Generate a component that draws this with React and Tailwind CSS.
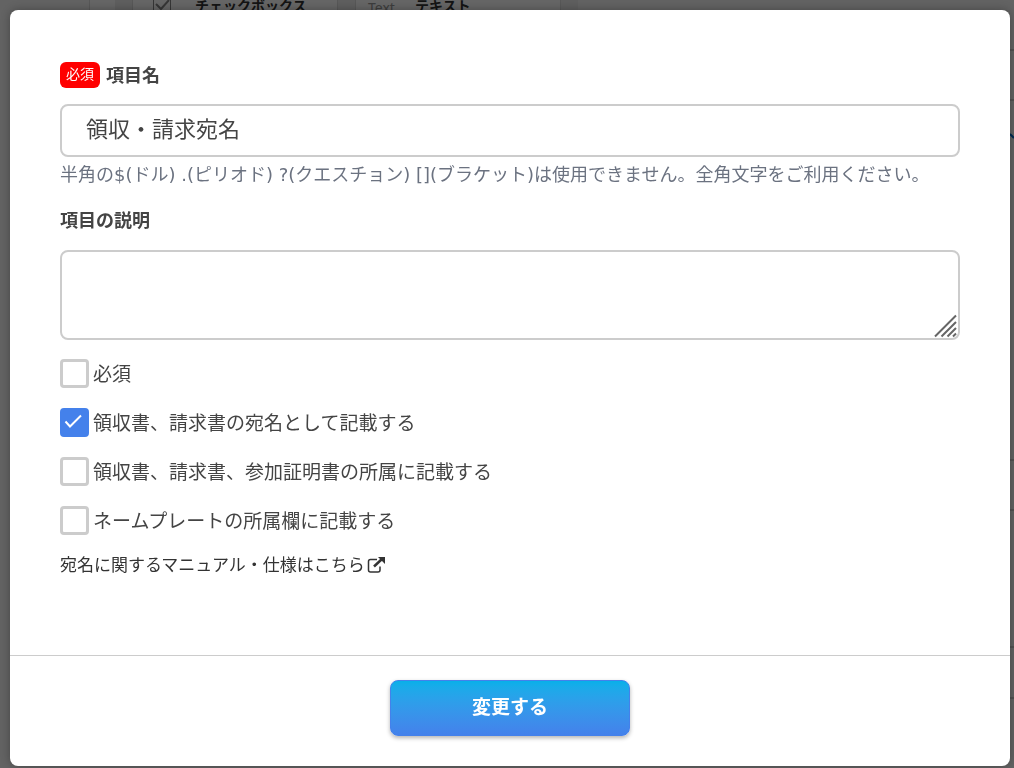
import { useState } from "react";

const OPTIONS = [
  { id: "required", label: "必須" },
  { id: "addressee", label: "領収書、請求書の宛名として記載する" },
  { id: "affiliation", label: "領収書、請求書、参加証明書の所属に記載する" },
  { id: "nameplate", label: "ネームプレートの所属欄に記載する" },
];

// Page that stays visible around the dialog
function FieldPalette() {
  return (
    <div
      className="fixed inset-0 flex justify-between overflow-hidden bg-[#f8f8f8]"
      aria-hidden="true"
    >
      <div className="flex h-10 pl-[89px] text-sm leading-5 font-bold text-[#333]">
        <div className="w-[26px] border-l border-[#ddd] bg-white" />
        <div className="w-[17px] bg-[#eee]" />
        <div className="flex w-[206px] border-x border-[#ddd] bg-white pl-5">
          <svg width="18" height="12" viewBox="0 0 18 12" fill="none" stroke="#888">
            <path d="M.5 0v11.500h17V0" />
            <path d="M3 4l5 5 8-9" strokeWidth="2" />
          </svg>
          <span className="-mt-1 ml-6 whitespace-nowrap">チェックボックス</span>
        </div>
        <div className="w-[17px] bg-[#eee]" />
        <div className="flex w-[206px] border-x border-[#ddd] bg-white pl-3">
          <span className="-mt-0.5 font-normal text-[#999]">Text</span>
          <span className="-mt-1 ml-5">テキスト</span>
        </div>
        <div className="w-[17px] bg-[#eee]" />
      </div>
      <div className="w-2 shrink-0 border-[#ccc]">
        <div className="h-[51px] border-b-2 border-[#ccc]" />
        <div className="h-[50px] border-b-2 border-[#ccc]" />
        <div className="flex h-[360px] justify-end border-b-2 border-[#ccc]">
          <svg className="mt-[30px]" width="4" height="8" viewBox="0 0 4 8">
            <path d="M0 3l4 4" stroke="#06c" strokeWidth="2" />
          </svg>
        </div>
        <div className="h-[50px] border-b-2 border-[#ccc]" />
        <div className="h-[137px] border-b-2 border-[#ccc]" />
        <div className="h-[51px] border-b-2 border-[#ccc]" />
      </div>
    </div>
  );
}

function SettingCheckbox({ id, label, checked, onChange }) {
  return (
    <div className="flex h-[29px] items-center gap-1">
      <span className="relative flex">
        <input
          id={id}
          type="checkbox"
          checked={checked}
          onChange={onChange}
          className="size-[29px] appearance-none rounded-sm border-3 border-[#ccc] bg-white checked:border-[#4481eb] checked:bg-[#4481eb]"
        />
        {checked && (
          <svg
            className="pointer-events-none absolute inset-0"
            width="29"
            height="29"
            viewBox="0 0 29 29"
            fill="none"
            stroke="white"
            strokeWidth="2"
          >
            <path d="M5.500 13.500l4.500 5L21 7.500" />
          </svg>
        )}
      </span>
      <label htmlFor={id} className="pt-0.5 text-[19px]">
        {label}
      </label>
    </div>
  );
}

export default function App() {
  const [name, setName] = useState("領収・請求宛名");
  const [description, setDescription] = useState("");
  const [selected, setSelected] = useState(["addressee"]);

  const toggle = (id) => {
    setSelected((prev) =>
      prev.includes(id) ? prev.filter((item) => item !== id) : [...prev, id],
    );
  };

  return (
    <div className="font-['Noto_Sans','Noto_Sans_CJK_JP',sans-serif] text-[#444]">
      <FieldPalette />
      <div className="fixed inset-0 bg-black/60" />

      {/* Dialog */}
      <form
        role="dialog"
        onSubmit={(e) => e.preventDefault()}
        className="relative mt-2.5 mr-1 mb-0.5 ml-2.5 rounded-lg bg-white shadow-[0_0_10px_rgba(0,0,0,0.3)]"
      >
        <div className="px-[50px] pt-13 pb-19">
          <div className="flex h-[26px] items-center gap-1.5">
            <span className="flex h-[26px] items-center rounded-md bg-[#f00] px-1.5 pb-0.5 text-sm text-white">
              必須
            </span>
            <label htmlFor="name" className="text-[18px] font-bold">
              項目名
            </label>
          </div>
          <input
            id="name"
            type="text"
            value={name}
            onChange={(e) => setName(e.target.value)}
            className="mt-4 block h-[53px] w-full rounded-lg border-2 border-[#ccc] bg-white px-6 pb-2 text-[22px]"
          />
          <p className="font-['DejaVu_Sans','Noto_Sans_CJK_JP',sans-serif] text-[18px] leading-9 text-[#6b7280]">
            半角の$(ドル) .(ピリオド) ?(クエスチョン)
            [](ブラケット)は使用できません。全角文字をご利用ください。
          </p>

          <label
            htmlFor="description"
            className="mt-3.5 block text-[18px] leading-[27px] font-bold"
          >
            項目の説明
          </label>
          <div className="relative mt-4">
            <textarea
              id="description"
              value={description}
              onChange={(e) => setDescription(e.target.value)}
              className="block h-[90px] w-full resize-none rounded-lg border-2 border-[#ccc] bg-white px-6 py-2 text-[22px]"
            />
            <svg
              className="pointer-events-none absolute right-0.5 bottom-0.5"
              width="24"
              height="24"
              viewBox="0 0 24 24"
              stroke="#666"
              strokeWidth="2"
            >
              <path d="M1 22.500L22 1.500M7.500 22.500L22 8M13.500 22.500l8.500-8.500M19 22.500l3-3" />
            </svg>
          </div>

          <div className="mt-[19px] flex flex-col gap-5">
            {OPTIONS.map(({ id, label }) => (
              <SettingCheckbox
                key={id}
                id={id}
                label={label}
                checked={selected.includes(id)}
                onChange={() => toggle(id)}
              />
            ))}
          </div>

          <a
            href="#manual"
            className="mt-4 flex items-center gap-0.5 text-[17px] leading-7 text-[#333]"
          >
            宛名に関するマニュアル・仕様はこちら
            <svg width="18" height="18" viewBox="0 0 18 18" fill="none" stroke="#333">
              <path
                d="M10 3.500H3.500Q1.500 3.500 1.500 5.500v8.500q0 2 2 2H11q2 0 2-2V10.500"
                strokeWidth="1.500"
              />
              <path d="M7 10.500l8-7.500" strokeWidth="2.500" />
              <path d="M11 1h7v7z" fill="#333" stroke="none" />
            </svg>
          </a>
        </div>

        {/* Footer */}
        <div className="flex justify-center border-t border-[#ccc] pt-6 pb-[30px]">
          <button
            type="submit"
            className="h-14 w-60 rounded-lg border border-[#4481eb] bg-linear-to-b from-[#07b0e9] to-[#4481eb] pb-0.5 text-[19px] font-bold text-white shadow-[0_2px_4px_rgba(0,0,0,0.3)]"
          >
            変更する
          </button>
        </div>
      </form>
    </div>
  );
}
